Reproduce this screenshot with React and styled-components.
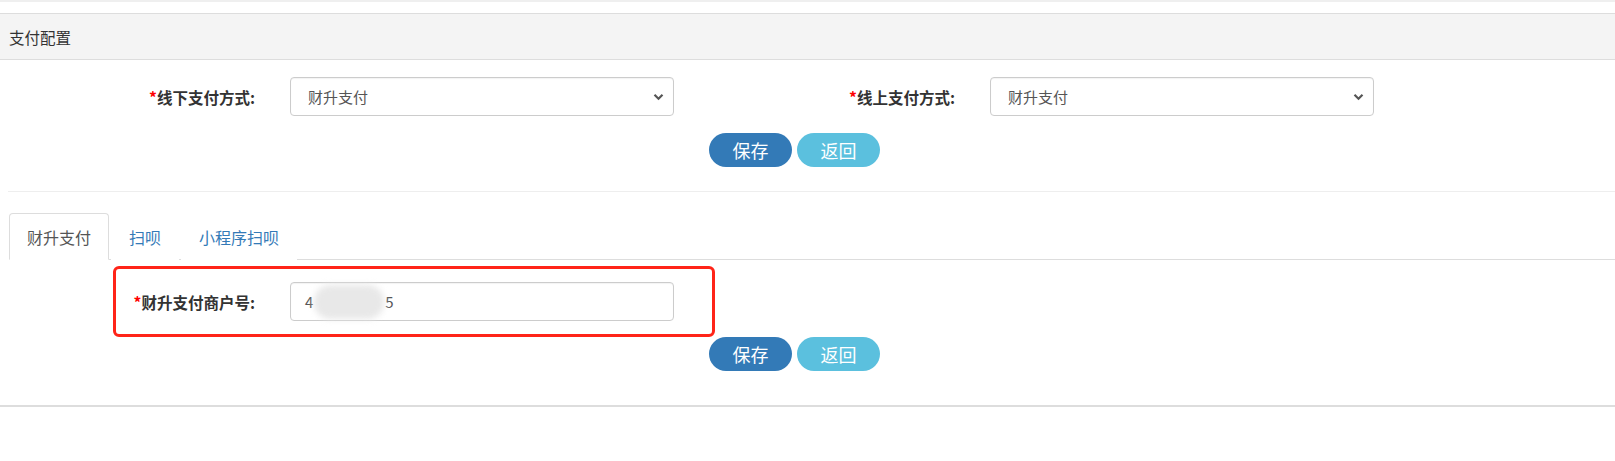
import React from 'react';
import styled, { createGlobalStyle } from 'styled-components';

const GlobalStyle = createGlobalStyle`
  body {
    margin: 0;
    background: #fff;
    font-family: 'Noto Sans CJK SC', 'Noto Sans', sans-serif;
    color: #333;
  }
`;

const Page = styled.div`
  width: 1615px;
`;

const TopStrip = styled.div`
  height: 2px;
  background: #efefef;
  margin-bottom: 11px;
`;

const PanelHeader = styled.div`
  height: 45px;
  border-top: 1px solid #ddd;
  border-bottom: 1px solid #ddd;
  background: #f4f4f4;
  display: flex;
  align-items: center;
  padding-left: 9px;
  font-size: 15.5px;
  color: #333;
`;

const FieldRow = styled.div`
  display: flex;
  margin-top: 17px;
`;

const Field = styled.div`
  width: ${(p) => p.width || 700}px;
  display: flex;
  align-items: center;
`;

const Label = styled.label`
  width: ${(p) => p.width || 255}px;
  padding-right: 35px;
  box-sizing: content-box;
  text-align: right;
  font-size: 15.5px;
  font-weight: 700;
  color: #333;
  white-space: nowrap;
`;

const Star = styled.span`
  color: #f00;
  font-weight: 700;
`;

const SelectBox = styled.div`
  width: 384px;
  height: 39px;
  box-sizing: border-box;
  border: 1px solid #ccc;
  border-radius: 4px;
  display: flex;
  align-items: center;
  justify-content: space-between;
  padding: 0 9px 0 17px;
  font-size: 15px;
  color: #555;
  box-shadow: inset 0 1px 1px rgba(0, 0, 0, 0.05);
`;

const InputBox = styled(SelectBox)`
  justify-content: flex-start;
  padding-left: 14px;
  color: #555;
`;

const Blur = styled.span`
  display: inline-block;
  width: 70px;
  height: 34px;
  margin: 0 1px;
  background: #e8e8e8;
  border-radius: 16px;
  filter: blur(3px);
`;

const ButtonRow = styled.div`
  display: flex;
  gap: 5px;
  padding-left: 709px;
  margin-top: ${(p) => p.top || 0}px;
`;

const Button = styled.button`
  width: 83px;
  height: 34px;
  border: none;
  border-radius: 17px;
  background: ${(p) => (p.variant === 'info' ? '#5bc0de' : '#337ab7')};
  color: #fff;
  font-family: inherit;
  font-size: 18px;
  padding: 0;
  cursor: pointer;
`;

const Divider = styled.div`
  margin: 24px 0 0 8px;
  border-top: 1px solid #eee;
`;

const TabBar = styled.div`
  display: flex;
  margin: 21px 0 0 9px;
  border-bottom: 1px solid #ddd;
`;

const Tab = styled.div`
  height: 47px;
  box-sizing: border-box;
  display: flex;
  align-items: center;
  padding: 0 17px;
  margin-right: 2px;
  margin-bottom: -1px;
  font-size: 16px;
  border: 1px solid ${(p) => (p.active ? '#ddd' : 'transparent')};
  border-bottom-color: ${(p) => (p.active ? '#fff' : 'transparent')};
  border-radius: 4px 4px 0 0;
  background: #fff;
  color: ${(p) => (p.active ? '#555' : '#337ab7')};
`;

const Highlight = styled.div`
  width: 602px;
  height: 71px;
  box-sizing: border-box;
  margin: 6px 0 0 113px;
  border: 3px solid #ff2418;
  border-radius: 6px;
  display: flex;
  align-items: center;
`;

const Footer = styled.div`
  height: 34px;
  border-bottom: 2px solid #ddd;
`;

const Chevron = () => (
  <svg width="11" height="8" viewBox="0 0 11 8">
    <path d="M1.5 1.8 L5.5 5.8 L9.5 1.8" fill="none" stroke="#555" strokeWidth="2.2" />
  </svg>
);

const SelectField = ({ label, value, width }) => (
  <Field>
    <Label width={width}>
      <Star>*</Star>
      {label}
    </Label>
    <SelectBox>
      <span>{value}</span>
      <Chevron />
    </SelectBox>
  </Field>
);

const Actions = ({ top }) => (
  <ButtonRow top={top}>
    <Button>保存</Button>
    <Button variant="info">返回</Button>
  </ButtonRow>
);

const App = () => (
  <Page>
    <GlobalStyle />
    <TopStrip />
    <PanelHeader>支付配置</PanelHeader>
    <FieldRow>
      <SelectField label="线下支付方式:" value="财升支付" />
      <SelectField label="线上支付方式:" value="财升支付" />
    </FieldRow>
    <Actions top={17} />
    <Divider />
    <TabBar>
      <Tab active>财升支付</Tab>
      <Tab>扫呗</Tab>
      <Tab>小程序扫呗</Tab>
    </TabBar>
    <Highlight>
      <Label width={139}>
        <Star>*</Star>
        财升支付商户号:
      </Label>
      <InputBox>
        4<Blur />5
      </InputBox>
    </Highlight>
    <Actions top={0} />
    <Footer />
  </Page>
);

export default App;
